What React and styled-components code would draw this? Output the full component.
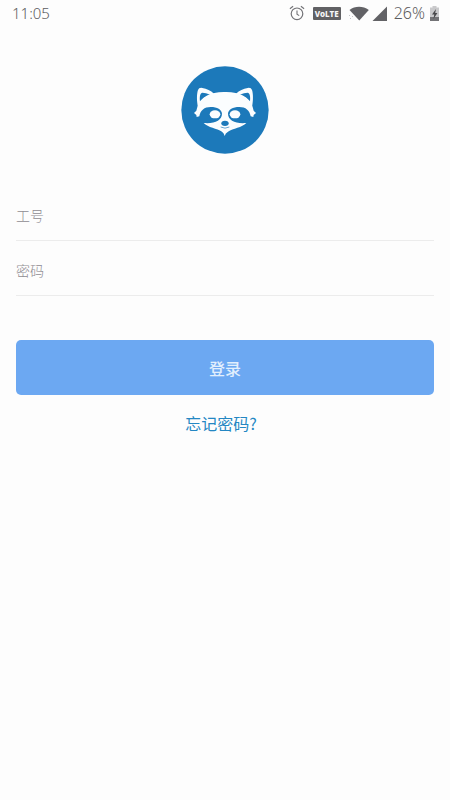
import React from "react";
import styled, { createGlobalStyle } from "styled-components";

const GlobalStyle = createGlobalStyle`
  *, *::before, *::after { box-sizing: border-box; }
  body {
    margin: 0;
    background: #fdfdfd;
    font-family: "Noto Sans CJK SC", sans-serif;
  }
`;

const Screen = styled.div`
  display: flex;
  flex-direction: column;
  min-height: 100vh;
`;

const StatusBar = styled.header`
  display: flex;
  align-items: center;
  justify-content: space-between;
  height: 26px;
  padding: 0 11px 0 12px;
  color: #5c5c60;
  font-family: "Noto Sans", sans-serif;
  font-size: 15px;
  font-weight: 300;
  line-height: 26px;
`;

const StatusGroup = styled.div`
  display: flex;
  align-items: center;
`;

const StatusIcon = styled.svg`
  display: block;
  flex: none;
  margin-right: ${({ $gap }) => $gap}px;
`;

const NetworkBadge = styled.span`
  width: 28px;
  height: 13px;
  margin-right: 8px;
  border-radius: 1px;
  background: #616164;
  color: #f7f7f7;
  font-size: 8px;
  font-weight: 800;
  line-height: 13px;
  text-align: center;
`;

const BatteryLevel = styled.span`
  margin-right: 5px;
  font-size: 16px;
`;

const Main = styled.main`
  display: flex;
  flex-direction: column;
  padding: 40px 16px 0;
`;

const Logo = styled.svg`
  display: block;
  align-self: center;
  width: 88px;
  height: 88px;
`;

const LoginForm = styled.form`
  display: flex;
  flex-direction: column;
  margin-top: 32px;
`;

const Field = styled.input`
  width: 100%;
  height: 55px;
  padding: 8px 0 4px;
  border: 0;
  border-bottom: 1px solid #ececec;
  border-radius: 0;
  outline: 0;
  background: transparent;
  color: #444;
  font: 300 14px/20px "Noto Sans CJK SC", sans-serif;

  &::placeholder {
    color: #8f8c92;
    opacity: 1;
  }

  &:focus { border-bottom-color: #6ca8f2; }
`;

const SubmitButton = styled.button`
  height: 55px;
  margin-top: 44px;
  padding: 0;
  border: 0;
  border-radius: 5px;
  background: #6ca8f2;
  color: #e2effd;
  font: 500 16px/24px "Noto Sans CJK SC", sans-serif;
  cursor: pointer;
`;

const ForgotLink = styled.a`
  align-self: center;
  margin: 16px 8px 0 0;
  color: #2487c3;
  font-size: 16px;
  line-height: 24px;
  text-decoration: none;
`;

function AlarmIcon() {
  return (
    <StatusIcon $gap={8} width="16" height="16" viewBox="0 0 16 16" fill="none" stroke="#737377" aria-label="Alarm">
      <circle cx="8" cy="8.8" r="5.8" strokeWidth="1.2" />
      <path d="M8 5.5v3.6l2.2 1.5M.9 3.8l3.2-2.6M15.1 3.8l-3.2-2.6" strokeWidth="1.1" />
    </StatusIcon>
  );
}

function WifiIcon() {
  return (
    <StatusIcon $gap={3} width="20" height="16" viewBox="0 0 20 16" fill="#626266" aria-label="Wi-Fi">
      <path d="M.5 5C6 .8 14 .8 19.8 5L10.3 15.5Z" />
      <path d="M0 10h1v1H0zM1 13h1v1H1zM3 11h1v1H3z" fill="#c4c4c7" />
    </StatusIcon>
  );
}

function SignalIcon() {
  return (
    <StatusIcon $gap={7} width="15" height="15" viewBox="0 0 15 15" fill="#626266" aria-label="Signal">
      <path d="M15 .5V15H.5Z" />
    </StatusIcon>
  );
}

function BatteryIcon() {
  return (
    <StatusIcon $gap={0} width="9" height="15" viewBox="0 0 9 15" aria-label="Charging">
      <path d="M2.5 0h4v1.5H9V11H0V1.5h2.5Z" fill="#c9c9cb" />
      <path d="M0 11h9v4H0Z" fill="#737376" />
      <path d="M6 3 2 8.5h2.3L3.4 13l4-6H5.2Z" fill="#48484b" />
    </StatusIcon>
  );
}

function RaccoonLogo() {
  return (
    <Logo viewBox="18 16 264 264" role="img" aria-label="Raccoon">
      <circle cx="150" cy="148" r="131" fill="#1c79ba" />
      <g fill="#fbfdfe">
        <path d="M69 140C65 120 65 100 69 88Q72 80 82 82Q102 85 117 99L84 126Z" />
        <path d="M231 140C235 120 235 100 231 88Q228 80 218 82Q198 85 183 99L216 126Z" />
      </g>
      <g fill="#1c79ba">
        <path d="M75 122C73 107 76 97 82 96Q92 96 106 102Q87 108 75 122Z" />
        <path d="M225 122C227 107 224 97 218 96Q208 96 194 102Q213 108 225 122Z" />
      </g>
      <path
        d="M150 94C108 93 77 108 67 139L64 150L57 157L64 163L65 169L73 167C76 149 88 139 107 139C127 139 140 147 141 159C141 179 119 190 86 187C99 201 126 203 141 213Q147 217 149 226Q151 217 159 213C174 203 201 201 214 187C181 190 159 179 159 159C160 147 173 139 193 139C212 139 224 149 227 167L235 169L236 163L243 157L236 150L233 139C223 108 192 93 150 94Z"
        fill="#fbfdfe"
      />
      <ellipse cx="120" cy="161" rx="16" ry="12" fill="#fbfdfe" />
      <ellipse cx="180" cy="161" rx="16" ry="12" fill="#fbfdfe" />
      <ellipse cx="150" cy="188" rx="11" ry="8" fill="#1c79ba" />
      <path d="M137 199Q150 206 163 199" fill="none" stroke="#1c79ba" strokeWidth="2" />
    </Logo>
  );
}

export default function App() {
  return (
    <>
      <GlobalStyle />
      <Screen>
        <StatusBar>
          <time>11:05</time>
          <StatusGroup>
            <AlarmIcon />
            <NetworkBadge>VoLTE</NetworkBadge>
            <WifiIcon />
            <SignalIcon />
            <BatteryLevel>26%</BatteryLevel>
            <BatteryIcon />
          </StatusGroup>
        </StatusBar>
        <Main>
          <RaccoonLogo />
          <LoginForm onSubmit={(event) => event.preventDefault()}>
            <Field type="text" name="employeeId" placeholder="工号" aria-label="工号" autoComplete="username" />
            <Field type="password" name="password" placeholder="密码" aria-label="密码" autoComplete="current-password" />
            <SubmitButton type="submit">登录</SubmitButton>
          </LoginForm>
          <ForgotLink href="#forgot">忘记密码?</ForgotLink>
        </Main>
      </Screen>
    </>
  );
}
